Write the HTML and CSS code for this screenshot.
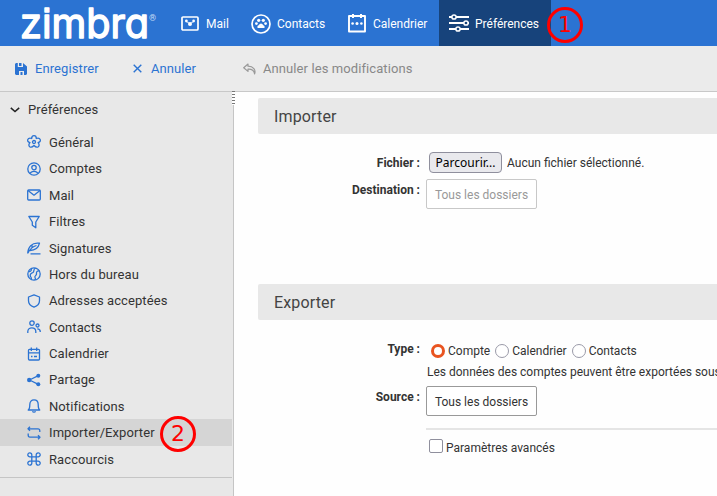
FILE: index.html
```html
<!DOCTYPE html>
<html lang="fr">
<head>
  <meta charset="UTF-8">
  <meta name="viewport" content="width=device-width, initial-scale=1.0">
  <title>Zimbra - Préférences</title>
  <link rel="stylesheet" href="styles.css">
</head>
<body>
  <header class="header">
    <svg class="logo" width="140" height="46" viewBox="0 0 140 46">
      <text class="logo-text" x="0" y="38" textLength="129" lengthAdjust="spacingAndGlyphs">zimbra</text>
      <text class="logo-reg" x="129" y="21">®</text>
    </svg>
    <nav class="tabs">
      <a class="tab tab-mail">
        <svg width="18" height="16" viewBox="0 0 18 16"><rect x="1" y="1" width="16" height="13" rx="1" fill="none" stroke="#fff" stroke-width="1.7"/><circle cx="5.4" cy="5" r="1.4"/><circle cx="12.6" cy="5" r="1.4"/><circle cx="9" cy="8" r="2"/><circle cx="7" cy="6.4" r=".7"/><circle cx="11" cy="6.4" r=".7"/></svg>
        <span>Mail</span>
      </a>
      <a class="tab tab-contacts">
        <svg width="20" height="20" viewBox="0 0 20 20"><circle cx="10" cy="10" r="9" fill="none" stroke="#fff" stroke-width="1.7"/><circle cx="7.7" cy="6.3" r="1.6"/><circle cx="12.3" cy="6.3" r="1.6"/><circle cx="5.4" cy="9.6" r="1.4"/><circle cx="14.6" cy="9.6" r="1.4"/><path d="M6.5 14V12c1.500 0 1.500-2.500 3.500-2.500s2 2.500 3.500 2.500v2z"/></svg>
        <span>Contacts</span>
      </a>
      <a class="tab tab-calendar">
        <svg width="18" height="20" viewBox="0 0 18 20"><path d="M1 2h16v15.500H1z" fill="none" stroke="#fff" stroke-width="1.900" stroke-linejoin="round"/><path d="M4 0h2v4H4zM12 0h2v4h-2z"/><circle cx="4.600" cy="9.500" r="1.300"/><circle cx="9" cy="9.500" r="1.500"/><circle cx="13.400" cy="9.500" r="1.300"/></svg>
        <span>Calendrier</span>
      </a>
      <a class="tab tab-prefs active">
        <svg width="20" height="20" viewBox="0 0 20 20" fill="none" stroke="#fff" stroke-width="2"><path d="M0 3h3M7 3h13M0 9h15M19 9h1M0 15h7M11 15h9"/><g stroke-width="1.500"><circle cx="5" cy="3" r="2.100"/><circle cx="17" cy="9" r="2.100"/><circle cx="9" cy="15" r="2.100"/></g></svg>
        <span>Préférences</span>
      </a>
    </nav>
  </header>

  <div class="toolbar">
    <a class="tool save">
      <svg width="12" height="12" viewBox="0 0 12 12"><path fill="#2b73d2" fill-rule="evenodd" d="M1 0h1.800v4H8V0l4 3.500V11l-1 1H9V8H4v4H1l-1-1V1zM4 0h2.500v3H4zM5.500 9h2v3h-2z"/></svg>
      <span>Enregistrer</span>
    </a>
    <a class="tool cancel">
      <svg width="9" height="9" viewBox="0 0 9 9"><path d="M.7.700l7.600 7.600M8.300.700L.700 8.300" stroke="#2b73d2" stroke-width="1.400"/></svg>
      <span>Annuler</span>
    </a>
    <a class="tool undo">
      <svg width="13" height="12" viewBox="0 0 13 12" fill="none" stroke="#999" stroke-linejoin="round"><path d="M5 1L.700 4.700 5 8.400V6.200c3.800-.2 6 1.300 6.600 4.600C13 7 10.500 3.200 5 3.200z" stroke-width="1.200"/></svg>
      <span>Annuler les modifications</span>
    </a>
  </div>

  <div class="main">
    <aside class="sidebar">
      <div class="tree-title">
        <svg width="10" height="6" viewBox="0 0 10 6"><path d="M.800.900L5 4.500 9.200.900" fill="none" stroke="#222" stroke-width="1.500"/></svg>
        <span>Préférences</span>
      </div>
      <ul class="tree">
        <li><svg viewBox="0 0 14 14"><path d="M4.700 3.500C4.700 1.700 5.400.7 7 .7s2.300 1 2.300 2.800c1.700-.5 3.300-.4 3.900 1.100.5 1.600-.4 2.500-2.100 3 1.100 1.500 1.500 3 .2 4.100-1.300.9-2.800.3-4.300-1.200-1.500 1.500-3 2.100-4.300 1.200-1.300-1.100-.9-2.600.2-4.100C1.200 7.100.3 6.200.8 4.600c.6-1.500 2.200-1.600 3.900-1.100z"/><circle cx="7" cy="7" r="1.500"/></svg><span>Général</span></li>
        <li><svg viewBox="0 0 14 14"><circle cx="7" cy="7" r="6.200"/><circle cx="7" cy="5.600" r="2.200"/><path d="M3.200 11.500C4 8.600 10 8.600 10.800 11.500"/></svg><span>Comptes</span></li>
        <li><svg viewBox="0 0 14 14"><rect x=".7" y="2" width="12.600" height="10" rx="1"/><path d="M1 2.500l6 4.700 6-4.700"/></svg><span>Mail</span></li>
        <li><svg viewBox="0 0 14 14"><path d="M1.800 1.500h10.400L8.800 7v5.800L5.300 10.300V7z"/></svg><span>Filtres</span></li>
        <li><svg viewBox="0 0 14 14"><path d="M.7 12.500C1 6.500 4.500 1 12.500 2.200 11.500 6.500 8.500 9.500 3 9.500M1 12C3 8 6 5.500 9.500 4.500M5 7.500V4M3.500 12.900h10"/></svg><span>Signatures</span></li>
        <li><svg viewBox="0 0 14 14"><circle cx="7" cy="7" r="6.200"/><path d="M8.500 1C6 2 7.500 4.500 6 5.500S3 6 3.200 8.500 5.500 10 4 12.500M12.500 4C9.500 3.500 9.300 5.500 9.500 7S7 9 8 10.500 8 12 8 13M2 4.500C4 5 4.500 3 4.300 1.600"/></svg><span>Hors du bureau</span></li>
        <li><svg viewBox="0 0 14 14"><path d="M7 .8l5.500 2.200v3.800c0 3-2.500 5.300-5.500 6.400C4 12.100 1.500 9.800 1.500 6.800V3z"/></svg><span>Adresses acceptées</span></li>
        <li><svg viewBox="0 0 14 14"><circle cx="5" cy="3.100" r="2.200"/><path d="M.8 13V11.500c0-4.800 8-4.800 8 0V13"/><circle cx="10.500" cy="5.500" r="1.500"/><path d="M10.300 8.900c2 0 3 .9 3 3"/></svg><span>Contacts</span></li>
        <li><svg viewBox="0 0 14 14"><rect x="1.500" y="2.300" width="11" height="10.700" rx="1"/><path d="M1.500 5.800h11M4.300.5v3.500M9.700.5v3.500M4 9.500h1.500M7 9.500h3"/></svg><span>Calendrier</span></li>
        <li><svg viewBox="0 0 14 14"><path d="M11.300 2.700L2.500 7l8.800 4.300"/><g fill="#2b73d2" stroke="none"><circle cx="11.300" cy="2.700" r="2"/><circle cx="2.200" cy="7" r="2.200"/><circle cx="11.300" cy="11.300" r="2"/></g></svg><span>Partage</span></li>
        <li><svg viewBox="0 0 14 14"><path d="M1.200 11C2.700 10 2.800 8 2.800 5.500 2.800 2.500 4.500.9 7 .9s4.200 1.600 4.200 4.600c0 2.500.1 4.500 1.600 5.500zM5.500 12.200c.5 1.300 2.500 1.300 3 0"/></svg><span>Notifications</span></li>
        <li class="selected"><svg viewBox="0 0 14 14"><path d="M3 .8L1 2.800l2 2M1 2.800h10c1.300 0 1.800.7 1.800 2V6M11 9.200l2 2-2 2M13 11.200H3c-1.300 0-1.800-.7-1.800-2V7.500"/></svg><span>Importer/Exporter</span></li>
        <li><svg viewBox="0 0 14 14"><path d="M4.800 4.800h4.400v4.400H4.800zM4.800 4.800H3A2 2 0 1 1 4.800 3zM9.200 4.800V3A2 2 0 1 1 11 4.800zM9.200 9.200H11A2 2 0 1 1 9.200 11zM4.800 9.200V11A2 2 0 1 1 3 9.200z"/></svg><span>Raccourcis</span></li>
      </ul>
    </aside>

    <section class="content">
      <div class="grip"></div>
      <h2>Importer</h2>
      <div class="form import">
        <div class="row file-row">
          <label>Fichier :</label>
          <button class="browse">Parcourir...</button>
          <span class="file-name">Aucun fichier sélectionné.</span>
        </div>
        <div class="row">
          <label>Destination :</label>
          <button class="folder disabled">Tous les dossiers</button>
        </div>
      </div>

      <h2>Exporter</h2>
      <div class="form export">
        <div class="row type-row">
          <label>Type :</label>
          <div class="radios">
            <i class="radio checked"></i><span>Compte</span>
            <i class="radio"></i><span>Calendrier</span>
            <i class="radio"></i><span>Contacts</span>
          </div>
        </div>
        <p class="hint">Les données des comptes peuvent être exportées sous</p>
        <div class="row">
          <label>Source :</label>
          <button class="folder">Tous les dossiers</button>
        </div>
        <div class="separator"></div>
        <div class="advanced"><i class="checkbox"></i><span>Paramètres avancés</span></div>
      </div>
    </section>
  </div>

  <div class="step step-1">1</div>
  <div class="step step-2">2</div>
</body>
</html>
```
FILE: styles.css
```css
* {
  box-sizing: border-box;
}

body {
  margin: 0;
  width: 717px;
  height: 496px;
  overflow: hidden;
  position: relative;
  display: flex;
  flex-direction: column;
  font-family: Roboto, "Liberation Sans", sans-serif;
  font-size: 12px;
  color: #333;
  background: #fefefe;
}

svg {
  display: block;
  flex: none;
}

span {
  white-space: nowrap;
}

/* header */
.header {
  height: 46px;
  flex: none;
  display: flex;
  background: #2b73d2;
  color: #fff;
}

.logo {
  margin-left: 20px;
}

.logo-text {
  font-family: Inter, sans-serif;
  font-size: 41px;
  font-feature-settings: "cv11", "ss07";
  fill: #fff;
  stroke: #fff;
  stroke-width: 1.4px;
  stroke-linejoin: round;
}

.logo-reg {
  font-size: 9px;
  fill: #c5daf5;
}

.tabs {
  display: flex;
}

.tab {
  display: flex;
  align-items: center;
  fill: #fff;
  padding-top: 1px;
}

.tab-mail {
  width: 70px;
  margin-left: 21px;
  gap: 7px;
}

.tab-contacts {
  width: 97px;
  gap: 6px;
}

.tab-calendar {
  width: 91px;
  gap: 7px;
}

.tab-prefs {
  width: 112px;
  gap: 6px;
  padding-left: 10px;
}

.tab.active {
  background: #17437b;
}

/* toolbar */
.toolbar {
  height: 46px;
  flex: none;
  display: flex;
  background: #ebebeb;
  border-bottom: 1px solid #c8c8c8;
  font-size: 13px;
  letter-spacing: 0.09px;
  color: #2b73d2;
}

.tool {
  display: flex;
  align-items: center;
}

.save {
  width: 118px;
  margin-left: 15px;
  gap: 8px;
}

.cancel {
  width: 110px;
  gap: 9px;
}

.undo {
  gap: 7px;
  color: #888;
}

.main {
  flex: 1;
  display: flex;
  min-height: 0;
}

/* sidebar */
.sidebar {
  width: 234px;
  flex: none;
  padding-right: 1px;
  background: #e8e8e8;
  border-right: 1px solid #c5c5c5;
  font-size: 13px;
  letter-spacing: 0.09px;
}

.tree-title {
  height: 37px;
  padding: 0 0 2px 10px;
  display: flex;
  align-items: center;
  gap: 8px;
}

.tree {
  list-style: none;
  margin: 0;
  padding: 0 0 5px;
  border-bottom: 1px solid #c5c5c5;
}

.tree li {
  height: 26.4px;
  display: flex;
  align-items: center;
  gap: 8px;
  padding: 0.5px 0 0 27px;
}

.tree svg {
  width: 14px;
  height: 14px;
  fill: none;
  stroke: #2b73d2;
  stroke-width: 1.3;
  stroke-linejoin: round;
}

.tree .selected {
  background: #d5d5d5;
}

/* content */
.content {
  flex: 1;
  min-width: 0;
  position: relative;
  overflow: visible;
  padding: 6px 0 0 24px;
}

.grip {
  position: absolute;
  left: -2px;
  top: -1px;
  width: 3px;
  height: 14px;
  background: repeating-linear-gradient(#777 0 1px, #fff 1px 3px);
}

h2 {
  margin: 0;
  height: 36px;
  padding-left: 16px;
  line-height: 37px;
  font-size: 16px;
  letter-spacing: 0.15px;
  font-weight: 400;
  color: #444;
  background: #e8e8e8;
  border-radius: 2px 0 0 2px;
}

.import {
  height: 150px;
  padding-top: 17px;
}

.export {
  padding-top: 20px;
}

.row {
  display: flex;
  align-items: flex-start;
}

.row label {
  width: 162px;
  margin-right: 6px;
  padding-top: 4px;
  text-align: right;
  font-weight: 700;
  line-height: 15px;
}

.file-row {
  height: 28px;
  align-items: flex-start;
}

.file-row label {
  padding-top: 5px;
}

.browse {
  width: 73px;
  height: 21px;
  margin: 1px 5px 0 3px;
  padding: 0;
  font: 12px "Noto Sans", sans-serif;
  color: #000;
  background: #e9e9ed;
  border: 1px solid #8f8f9d;
  border-radius: 4px;
}

.file-name {
  line-height: 24px;
}

.folder {
  width: 111px;
  height: 30px;
  padding: 2px 0 0;
  font: inherit;
  color: #333;
  background: #fff;
  border: 1px solid #999;
  border-radius: 2px;
}

.folder.disabled {
  color: #999;
  border-color: #c8c8c8;
}

.type-row {
  height: 24px;
}

.type-row label {
  padding-top: 2px;
}

.radios {
  display: flex;
  align-items: center;
  height: 22px;
  padding-left: 5px;
}

.radios span {
  margin: 0 5px 0 3px;
}

.radio {
  width: 14px;
  height: 14px;
  border: 1px solid #9a9aa8;
  border-radius: 50%;
  background: #fff;
}

.radio.checked {
  border: 3px solid #e95420;
}

.hint {
  margin: 0 0 0 169px;
  height: 22px;
  line-height: 16px;
  white-space: nowrap;
}

.separator {
  height: 2px;
  margin: 12px 0 9px 168px;
  background: #e5e5e5;
}

.advanced {
  display: flex;
  gap: 3px;
  padding-left: 171px;
  line-height: 19px;
}

.checkbox {
  width: 14px;
  height: 14px;
  border: 1px solid #8f8f9d;
  border-radius: 2px;
  background: #fff;
}

/* numbered marks over the page */
.step {
  position: absolute;
  width: 36px;
  height: 36px;
  border: 3px solid #f00;
  border-radius: 50%;
  font: 22px/30px "DejaVu Sans", sans-serif;
  text-align: center;
  color: #f00;
}

.step-1 {
  left: 547px;
  top: 7px;
}

.step-2 {
  left: 160px;
  top: 416px;
}
```
